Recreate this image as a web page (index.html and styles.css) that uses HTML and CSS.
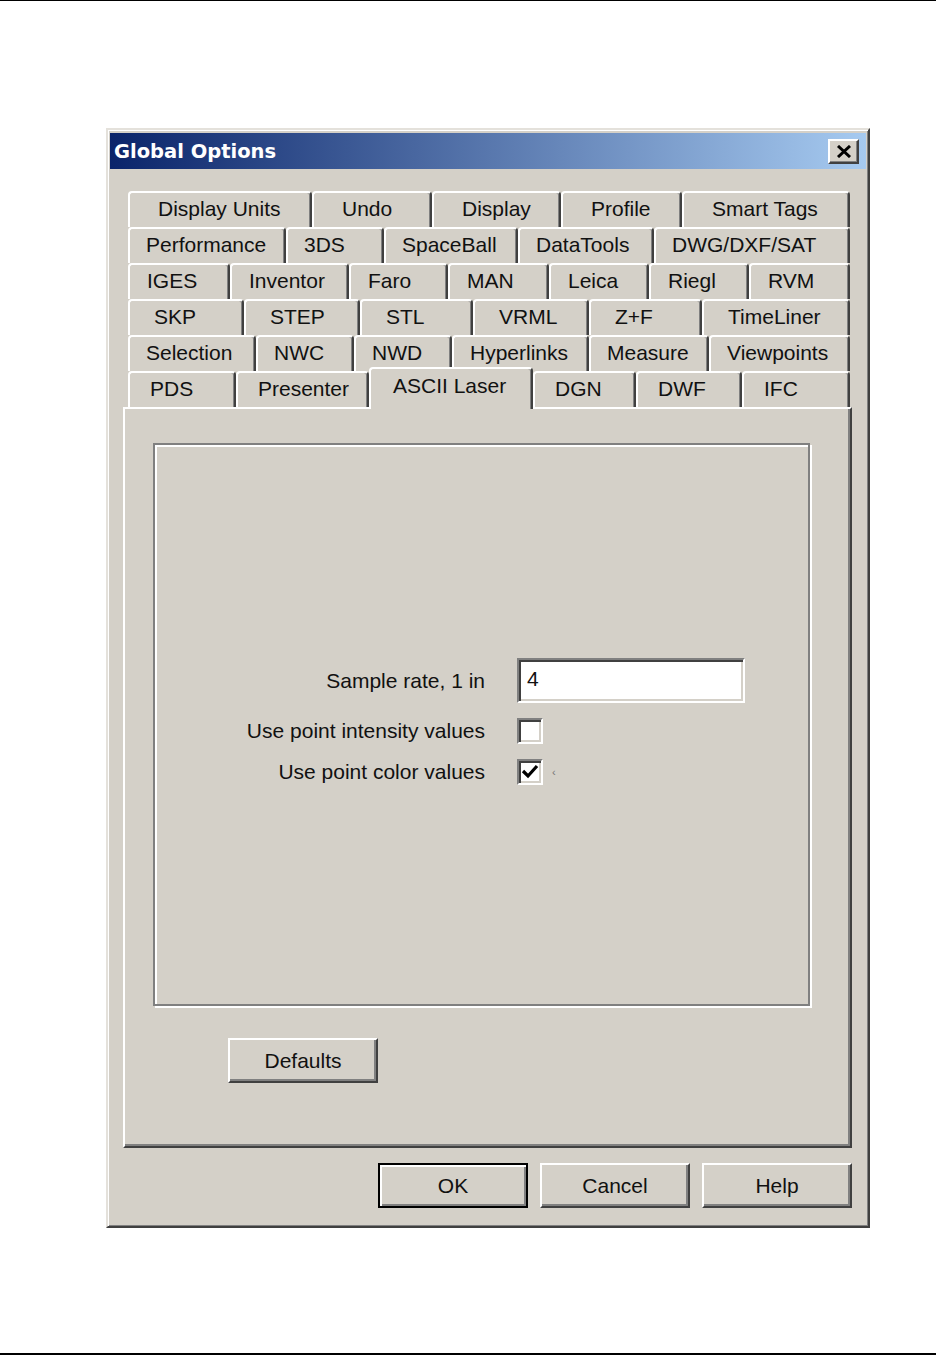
FILE: index.html
```html
<!DOCTYPE html>
<html lang="en">
<head>
    <meta charset="UTF-8">
    <title>Global Options</title>
    <link rel="stylesheet" href="styles.css">
</head>
<body>
    <div class="page">
        <div class="rule-top"></div>

        <!-- Global Options dialog -->
        <div class="dialog">
            <div class="titlebar">
                <span class="title">Global Options</span>
                <span class="close">
                    <svg width="16" height="13" viewBox="0 0 16 13">
                        <path d="M2 1 L14 12 M14 1 L2 12" stroke="#000" stroke-width="3" fill="none"/>
                    </svg>
                </span>
            </div>

            <div class="body">
                <div class="tabs">
                    <div class="tab-row row1">
                        <div class="tab w184">Display Units</div>
                        <div class="tab w120">Undo</div>
                        <div class="tab w129">Display</div>
                        <div class="tab w121">Profile</div>
                        <div class="tab w168">Smart Tags</div>
                    </div>
                    <div class="tab-row row2">
                        <div class="tab w158">Performance</div>
                        <div class="tab w98">3DS</div>
                        <div class="tab w134">SpaceBall</div>
                        <div class="tab w136">DataTools</div>
                        <div class="tab w196">DWG/DXF/SAT</div>
                    </div>
                    <div class="tab-row row3">
                        <div class="tab w102">IGES</div>
                        <div class="tab w119">Inventor</div>
                        <div class="tab w99">Faro</div>
                        <div class="tab w101">MAN</div>
                        <div class="tab w100">Leica</div>
                        <div class="tab w100">Riegl</div>
                        <div class="tab w101">RVM</div>
                    </div>
                    <div class="tab-row row4">
                        <div class="tab w116">SKP</div>
                        <div class="tab w116">STEP</div>
                        <div class="tab w113">STL</div>
                        <div class="tab w116">VRML</div>
                        <div class="tab w113">Z+F</div>
                        <div class="tab w148">TimeLiner</div>
                    </div>
                    <div class="tab-row row5">
                        <div class="tab w128">Selection</div>
                        <div class="tab w98">NWC</div>
                        <div class="tab w98">NWD</div>
                        <div class="tab w137">Hyperlinks</div>
                        <div class="tab w120">Measure</div>
                        <div class="tab w141">Viewpoints</div>
                    </div>
                    <div class="tab-row row6">
                        <div class="tab w108">PDS</div>
                        <div class="tab w133">Presenter</div>
                        <div class="tab active w164">ASCII Laser</div>
                        <div class="tab w103">DGN</div>
                        <div class="tab w106">DWF</div>
                        <div class="tab w108">IFC</div>
                    </div>
                </div>

                <div class="panel">
                    <div class="frame">
                        <div class="fields">
                            <label class="label">Sample rate, 1 in</label>
                            <div class="control">
                                <div class="textbox">4</div>
                            </div>

                            <label class="label">Use point intensity values</label>
                            <div class="control">
                                <span class="checkbox"></span>
                            </div>

                            <label class="label">Use point color values</label>
                            <div class="control">
                                <span class="checkbox">
                                    <svg width="18" height="16" viewBox="0 0 18 16">
                                        <path d="M2 7 L7 12 L16 2" stroke="#000" stroke-width="3.2" fill="none"/>
                                    </svg>
                                </span>
                                <span class="focus-mark">&lsaquo;</span>
                            </div>
                        </div>
                    </div>
                    <button class="btn defaults">Defaults</button>
                </div>

                <div class="buttons">
                    <button class="btn default">OK</button>
                    <button class="btn">Cancel</button>
                    <button class="btn">Help</button>
                </div>
            </div>
        </div>

        <div class="rule-bottom"></div>
    </div>
</body>
</html>
```

FILE: styles.css
```css
* {
    box-sizing: border-box;
    margin: 0;
    padding: 0;
}
body {
    background-color: #fff;
    font-family: "Liberation Sans", Arial, sans-serif;
    font-size: 21px;
    color: #111;
}
.page {
    min-height: 1355px;
    display: flex;
    flex-direction: column;
}
.rule-top {
    height: 1px;
    background-color: #000;
}
.rule-bottom {
    margin-top: auto;
    height: 2px;
    background-color: #000;
}

/* dialog window */
.dialog {
    margin: 127px 0 0 106px;
    width: 764px;
    height: 1100px;
    background-color: #d4d0c8;
    border: 2px solid;
    border-color: #e4e1db #404040 #404040 #e4e1db;
    box-shadow: inset 1px 1px 0 #fff, inset -1px -1px 0 #808080;
    padding: 3px 2px 2px;
    display: flex;
    flex-direction: column;
}
.titlebar {
    height: 36px;
    background: linear-gradient(to right, #0a246a, #a6caf0);
    display: flex;
    align-items: center;
    justify-content: space-between;
    padding: 0 7px 0 4px;
}
.title {
    color: #fff;
    font-family: "DejaVu Sans", sans-serif;
    font-weight: bold;
    font-size: 19.5px;
}
.close {
    width: 31px;
    height: 25px;
    background-color: #d4d0c8;
    border: 2px solid;
    border-color: #fff #404040 #404040 #fff;
    box-shadow: inset -1px -1px 0 #808080;
    display: flex;
    align-items: center;
    justify-content: center;
}
.body {
    flex: 1;
    padding: 22px 14px 0 13px;
    display: flex;
    flex-direction: column;
}

/* tab strip */
.tabs {
    padding: 0 2px 0 5px;
}
.tab-row {
    display: flex;
    height: 36px;
}
.tab {
    flex: none;
    height: 36px;
    background-color: #d4d0c8;
    border-top: 2px solid #fff;
    border-left: 2px solid #fff;
    border-right: 2px solid #404040;
    box-shadow: inset -1px 0 0 #808080;
    border-radius: 4px 4px 0 0;
    line-height: 32px;
    white-space: nowrap;
}
.row1 .tab { padding-left: 28px; }
.row2 .tab { padding-left: 16px; }
.row3 .tab { padding-left: 17px; }
.row4 .tab { padding-left: 24px; }
.row5 .tab { padding-left: 16px; }
.row6 .tab { padding-left: 20px; }
.row6 .tab.active {
    height: 42px;
    margin: -4px 0 -2px;
    padding: 1px 0 0 22px;
    position: relative;
    z-index: 1;
}
.w98 { width: 98px; }
.w99 { width: 99px; }
.w100 { width: 100px; }
.w101 { width: 101px; }
.w102 { width: 102px; }
.w103 { width: 103px; }
.w106 { width: 106px; }
.w108 { width: 108px; }
.w113 { width: 113px; }
.w116 { width: 116px; }
.w119 { width: 119px; }
.w120 { width: 120px; }
.w121 { width: 121px; }
.w128 { width: 128px; }
.w129 { width: 129px; }
.w133 { width: 133px; }
.w134 { width: 134px; }
.w136 { width: 136px; }
.w137 { width: 137px; }
.w141 { width: 141px; }
.w148 { width: 148px; }
.w158 { width: 158px; }
.w164 { width: 164px; }
.w168 { width: 168px; }
.w184 { width: 184px; }
.w196 { width: 196px; }

/* tab page */
.panel {
    height: 741px;
    background-color: #d4d0c8;
    border: 2px solid;
    border-color: #fff #404040 #404040 #fff;
    box-shadow: inset -2px -2px 0 #808080;
    padding: 34px 0 0 28px;
}
.frame {
    width: 657px;
    height: 563px;
    border: 2px solid #808080;
    box-shadow: inset 2px 2px 0 #fff, 2px 2px 0 #fff;
}
.fields {
    display: grid;
    grid-template-columns: 330px 260px;
    column-gap: 32px;
    row-gap: 15px;
    align-items: center;
    margin-top: 213px;
}
.label {
    text-align: right;
    white-space: nowrap;
}
.control {
    display: flex;
    align-items: center;
}
.textbox {
    width: 228px;
    height: 45px;
    background-color: #fff;
    border: 2px solid;
    border-color: #808080 #fff #fff #808080;
    box-shadow: inset 2px 2px 0 #404040, inset -2px -2px 0 #d4d0c8;
    padding: 0 8px;
    line-height: 38px;
}
.checkbox {
    width: 26px;
    height: 26px;
    background-color: #fff;
    border: 2px solid;
    border-color: #808080 #fff #fff #808080;
    box-shadow: inset 2px 2px 0 #404040, inset -2px -2px 0 #d4d0c8;
    display: flex;
    align-items: center;
    justify-content: center;
}
.focus-mark {
    margin-left: 9px;
    font-size: 11px;
    color: #777;
}

/* push buttons */
.btn {
    width: 150px;
    height: 45px;
    background-color: #d4d0c8;
    border: 2px solid;
    border-color: #fff #404040 #404040 #fff;
    box-shadow: inset -2px -2px 0 #808080;
    font: inherit;
    color: #111;
}
.btn.default {
    border: 2px solid #000;
    box-shadow: inset 2px 2px 0 #fff, inset -2px -2px 0 #808080;
}
.defaults {
    display: block;
    margin: 32px 0 0 75px;
}
.buttons {
    display: flex;
    justify-content: flex-end;
    gap: 12px;
    margin-top: 15px;
}
```
